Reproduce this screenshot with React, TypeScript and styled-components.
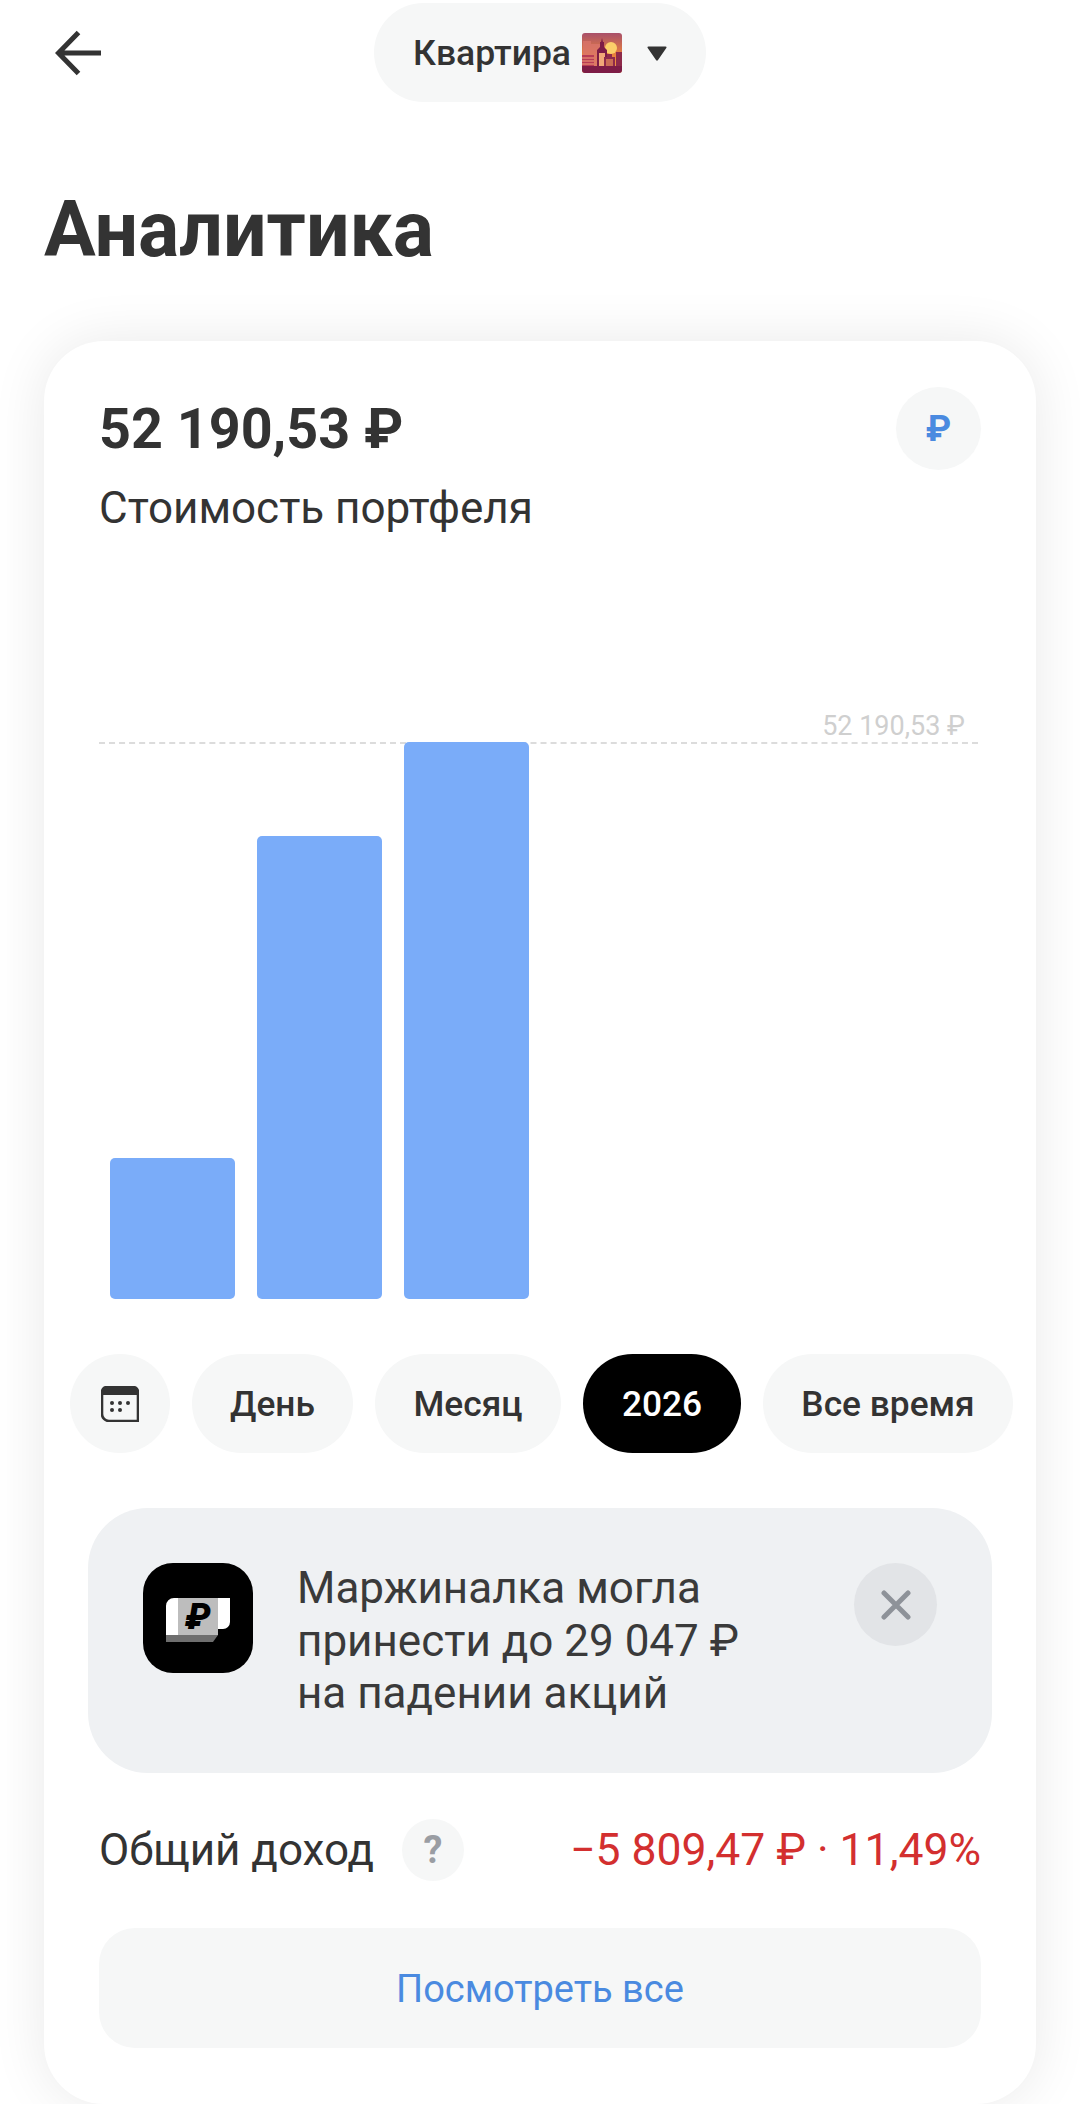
import React from "react";
import styled, { createGlobalStyle } from "styled-components";

const Global = createGlobalStyle`
  html, body { margin: 0; padding: 0; background: #fff; }
  body { width: 1080px; height: 2104px; overflow: hidden; font-family: Roboto, "Liberation Sans", sans-serif; color: #333; }
  * { box-sizing: border-box; }
`;

const Page = styled.div`
  width: 1080px;
  height: 2104px;
  overflow: hidden;
  display: flex;
  flex-direction: column;
`;
const Header = styled.header`
  display: grid;
  grid-template-columns: 1fr auto 1fr;
  align-items: center;
  padding: 3px 55px 0;
  height: 102px;
`;
const BackIcon = styled.svg`
  width: 46px;
  height: 46px;
  display: block;
`;
const AccountPill = styled.div`
  height: 99px;
  width: 332px;
  border-radius: 50px;
  background: #f6f7f7;
  display: flex;
  align-items: center;
  padding-left: 39px;
  font-size: 35.5px;
  font-weight: 500;
`;
const PillEmoji = styled.svg`
  width: 40px;
  height: 40px;
  margin-left: 11px;
  flex: none;
`;
const Caret = styled.svg`
  width: 20px;
  height: 16px;
  margin-left: 25px;
  flex: none;
`;
const Title = styled.h1`
  margin: 84px 0 0 44px;
  font-size: 77px;
  line-height: 88px;
  font-weight: 700;
  color: #333;
`;
const Card = styled.section`
  margin: 67px 44px 0;
  height: 1800px;
  border-radius: 60px;
  background: #fff;
  box-shadow: 0 0 56px rgba(0, 0, 0, 0.09);
  padding-top: 46px;
`;
const Summary = styled.div`
  display: flex;
  justify-content: space-between;
  padding: 0 55px;
`;
const AmountBlock = styled.div`
  padding-top: 2px;
`;
const Amount = styled.div`
  font-size: 55.7px;
  line-height: 80px;
  font-weight: 700;
`;
const Subtitle = styled.div`
  font-size: 44px;
  line-height: 50px;
  margin-top: 14px;
`;
const CurrencyBadge = styled.div`
  width: 85px;
  height: 83px;
  border-radius: 50%;
  background: #f6f7f7;
  color: #4a8ae0;
  font-size: 36px;
  font-weight: 700;
  display: flex;
  align-items: center;
  justify-content: center;
`;
const Chart = styled.div`
  position: relative;
  margin: 209px 58px 0 55px;
  height: 557px;
  border-top: 2px dashed #dcdcdc;
  display: flex;
  align-items: flex-end;
  gap: 22px;
  padding-left: 11px;
`;
const ChartLabel = styled.span`
  position: absolute;
  right: 13px;
  top: -34px;
  font-size: 27px;
  line-height: 32px;
  color: #cfcfcf;
`;
const Bar = styled.div<{ $h: number }>`
  width: 125px;
  height: ${(p) => p.$h}px;
  background: #7aacf9;
  border-radius: 5px;
`;
const Tabs = styled.div`
  display: flex;
  gap: 22px;
  margin-top: 55px;
  padding-left: 26px;
`;
const Tab = styled.div<{ $w: number; $active?: boolean }>`
  width: ${(p) => p.$w}px;
  height: 99px;
  border-radius: 50px;
  background: ${(p) => (p.$active ? "#000" : "#f6f7f7")};
  color: ${(p) => (p.$active ? "#fff" : "#333")};
  font-size: 35.3px;
  font-weight: 500;
  display: flex;
  align-items: center;
  justify-content: center;
  flex: none;
`;
const Banner = styled.div`
  margin: 55px 44px 0;
  height: 265px;
  border-radius: 60px;
  background: #eff1f3;
  padding: 55px;
  display: flex;
  align-items: flex-start;
`;
const BannerIcon = styled.svg`
  width: 110px;
  height: 110px;
  flex: none;
`;
const BannerText = styled.div`
  margin: -1px 0 0 44px;
  font-size: 44px;
  line-height: 52.5px;
  width: 480px;
  color: #3a3a3a;
`;
const CloseButton = styled.div`
  width: 83px;
  height: 83px;
  margin-left: auto;
  border-radius: 50%;
  background: #e2e4e7;
  display: flex;
  align-items: center;
  justify-content: center;
  flex: none;
`;
const IncomeRow = styled.div`
  margin: 46px 55px 0;
  height: 62px;
  display: flex;
  align-items: center;
`;
const IncomeLabel = styled.div`
  font-size: 44px;
`;
const Help = styled.div`
  width: 62px;
  height: 62px;
  border-radius: 50%;
  background: #f6f7f7;
  color: #9a9da3;
  font-size: 38px;
  font-weight: 700;
  margin-left: 28px;
  display: flex;
  align-items: center;
  justify-content: center;
`;
const IncomeValue = styled.div`
  margin-left: auto;
  font-size: 44.5px;
  color: #d32f2f;
`;
const ViewAll = styled.div`
  margin: 47px 55px 0;
  height: 120px;
  padding-top: 2px;
  border-radius: 36px;
  background: #f6f7f7;
  color: #4a8ae0;
  font-size: 38px;
  display: flex;
  align-items: center;
  justify-content: center;
`;

const CityEmoji = () => (
  <PillEmoji viewBox="0 0 40 40">
    <defs>
      <linearGradient id="sky" x1="0" y1="0" x2="0" y2="1">
        <stop offset="0" stopColor="#a9506a" />
        <stop offset="0.55" stopColor="#e9823c" />
        <stop offset="1" stopColor="#f09a48" />
      </linearGradient>
    </defs>
    <rect width="40" height="40" rx="3" fill="url(#sky)" />
    <circle cx="29" cy="15" r="6" fill="#fbcf6a" />
    <path d="M1 8h8v3h9v24H1z" fill="#d9746a" opacity=".8" />
    <path d="M15 35V17l3-3V9h1l1-4 1 4h1v5l3 3v18z" fill="#7d1c46" />
    <path d="M17 20h6v15h-6z" fill="#f0a878" />
    <path d="M22 35V24h3v-3h5v3h3v11z" fill="#8e2a4a" />
    <path d="M24 26h7v9h-7z" fill="#d97d58" opacity=".8" />
    <path d="M34 35V19h6v16z" fill="#8e2a4a" />
    <path d="M0 22h12v13H0z" fill="#b83c55" />
    <path d="M0 25h12M0 28h12M0 31h12" stroke="#f3a27b" strokeWidth="1.200" />
    <path d="M0 33h40v4a3 3 0 0 1-3 3H3a3 3 0 0 1-3-3z" fill="#7d1c46" />
  </PillEmoji>
);

export default function App() {
  return (
    <Page>
      <Global />
      <Header>
        <BackIcon viewBox="0 0 46 46" fill="none" stroke="#333" strokeWidth="5">
          <path d="M46 23H4M23.500 2.500 3.500 23l20 20.500" />
        </BackIcon>
        <AccountPill>
          Квартира
          <CityEmoji />
          <Caret viewBox="0 0 20 16">
            <path d="M1.500 1.500h17a1 1 0 0 1 .8 1.500L11 15a1.200 1.200 0 0 1-2 0L.7 3a1 1 0 0 1 .8-1.500z" fill="#333" />
          </Caret>
        </AccountPill>
        <span />
      </Header>
      <Title>Аналитика</Title>
      <Card>
        <Summary>
          <AmountBlock>
            <Amount>52 190,53 ₽</Amount>
            <Subtitle>Стоимость портфеля</Subtitle>
          </AmountBlock>
          <CurrencyBadge>₽</CurrencyBadge>
        </Summary>
        <Chart>
          <ChartLabel>52 190,53 ₽</ChartLabel>
          <Bar $h={141} />
          <Bar $h={463} />
          <Bar $h={557} />
        </Chart>
        <Tabs>
          <Tab $w={100}>
            <svg width="38" height="36" viewBox="0 0 38 36">
              <path d="M6 1h26a5 5 0 0 1 5 5v29H8a7 7 0 0 1-7-7V6a5 5 0 0 1 5-5z" fill="none" stroke="#333" strokeWidth="2.600" />
              <path d="M6 1h26a5 5 0 0 1 5 5v3H1V6a5 5 0 0 1 5-5z" fill="#333" />
              <g fill="#333">
                <circle cx="11" cy="17" r="2" /><circle cx="19" cy="17" r="2" /><circle cx="27" cy="17" r="2" />
                <circle cx="11" cy="24" r="2" /><circle cx="19" cy="24" r="2" />
              </g>
            </svg>
          </Tab>
          <Tab $w={161}>День</Tab>
          <Tab $w={186}>Месяц</Tab>
          <Tab $w={158} $active>2026</Tab>
          <Tab $w={250}>Все время</Tab>
        </Tabs>
        <Banner>
          <BannerIcon viewBox="0 0 110 110">
            <rect width="110" height="110" rx="30" fill="#000" />
            <path d="M31 35h56v24a7 7 0 0 1-7 7h-5l-5 6H23V43a8 8 0 0 1 8-8z" fill="#fff" />
            <rect x="35" y="35" width="40" height="37" fill="#bdbdbd" />
            <path d="M23 72h52l-5 7H23z" fill="#6e6e6e" />
            <text x="55" y="66" textAnchor="middle" fontFamily="Roboto, sans-serif" fontWeight="900" fontSize="36" fill="#000" fontStyle="italic">₽</text>
          </BannerIcon>
          <BannerText>Маржиналка могла принести до 29 047 ₽ на падении акций</BannerText>
          <CloseButton>
            <svg width="30" height="30" viewBox="0 0 30 30">
              <path d="M3 3l24 24M27 3 3 27" stroke="#8e9299" strokeWidth="5" strokeLinecap="round" />
            </svg>
          </CloseButton>
        </Banner>
        <IncomeRow>
          <IncomeLabel>Общий доход</IncomeLabel>
          <Help>?</Help>
          <IncomeValue>−5 809,47 ₽ · 11,49%</IncomeValue>
        </IncomeRow>
        <ViewAll>Посмотреть все</ViewAll>
      </Card>
    </Page>
  );
}
